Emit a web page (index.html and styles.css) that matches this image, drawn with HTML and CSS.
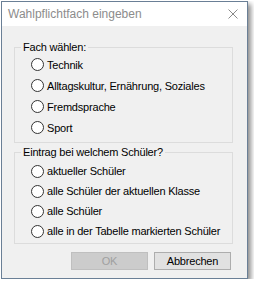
FILE: index.html
```html
<!DOCTYPE html>
<html>
<head>
    <title>Wahlpflichtfach eingeben</title>
    <link rel="stylesheet" href="styles.css">
</head>
<body>
    <div class="window">
        <div class="titlebar">
            <span class="title">Wahlpflichtfach eingeben</span>
            <svg class="close" width="10" height="10" viewBox="0 0 10 10">
                <path d="M0.5 0.5 L9.5 9.5 M9.5 0.5 L0.5 9.5" stroke="#8a8a8a" stroke-width="1" fill="none"/>
            </svg>
        </div>
        <div class="content">
            <fieldset class="group group-fach">
                <legend>Fach wählen:</legend>
                <label class="option"><span class="radio"></span>Technik</label>
                <label class="option"><span class="radio"></span>Alltagskultur, Ernährung, Soziales</label>
                <label class="option"><span class="radio"></span>Fremdsprache</label>
                <label class="option"><span class="radio"></span>Sport</label>
            </fieldset>
            <fieldset class="group group-schueler">
                <legend>Eintrag bei welchem Schüler?</legend>
                <label class="option"><span class="radio"></span>aktueller Schüler</label>
                <label class="option"><span class="radio"></span>alle Schüler der aktuellen Klasse</label>
                <label class="option"><span class="radio"></span>alle Schüler</label>
                <label class="option"><span class="radio"></span>alle in der Tabelle markierten Schüler</label>
            </fieldset>
            <div class="buttons">
                <button class="btn" disabled>OK</button>
                <button class="btn">Abbrechen</button>
            </div>
        </div>
    </div>
</body>
</html>
```

FILE: styles.css
```css
body {
    margin: 1px;
    background: #fff;
    font-family: "Liberation Sans", Arial, sans-serif;
    font-size: 11px;
    color: #000;
}
.window {
    width: 245px;
    height: 276px;
    border: 1px solid #6a7f96;
    background: #f0f0f0;
    box-shadow: 3px 3px 5px rgba(0, 0, 0, 0.45);
    display: flex;
    flex-direction: column;
}
.titlebar {
    height: 24px;
    background: #fff;
    display: flex;
    align-items: center;
    justify-content: space-between;
    padding: 0 9px 0 6px;
}
.title {
    font-size: 12px;
    color: #8c8c8c;
}
.close {
    display: block;
}
.content {
    padding: 14px 14px 0 12px;
    display: flex;
    flex-direction: column;
    letter-spacing: -0.2px;
}
.group {
    margin: 0;
    padding: 0 0 4px 16px;
    border: 1px solid #dcdcdc;
    min-width: 0;
}
.group legend {
    margin-left: -10px;
    padding: 0 2px;
    line-height: 14px;
}
.group-schueler {
    margin-top: 2px;
    padding-top: 2px;
    padding-bottom: 2px;
}
.option {
    display: flex;
    align-items: center;
    height: 21px;
}
.group-schueler .option {
    height: 20px;
}
.radio {
    width: 11px;
    height: 11px;
    border: 1px solid #333;
    border-radius: 50%;
    background: #fff;
    margin-right: 3px;
    flex: none;
}
.buttons {
    display: flex;
    justify-content: flex-end;
    gap: 6px;
    margin-top: 8px;
    padding-right: 2px;
}
.btn {
    width: 77px;
    height: 18px;
    padding: 0;
    font-family: inherit;
    font-size: 11px;
    letter-spacing: inherit;
    background: #e1e1e1;
    border: 1px solid #adadad;
    color: #000;
}
.btn:disabled {
    background: #cccccc;
    border-color: #bfbfbf;
    color: #a0a0a0;
}
```
